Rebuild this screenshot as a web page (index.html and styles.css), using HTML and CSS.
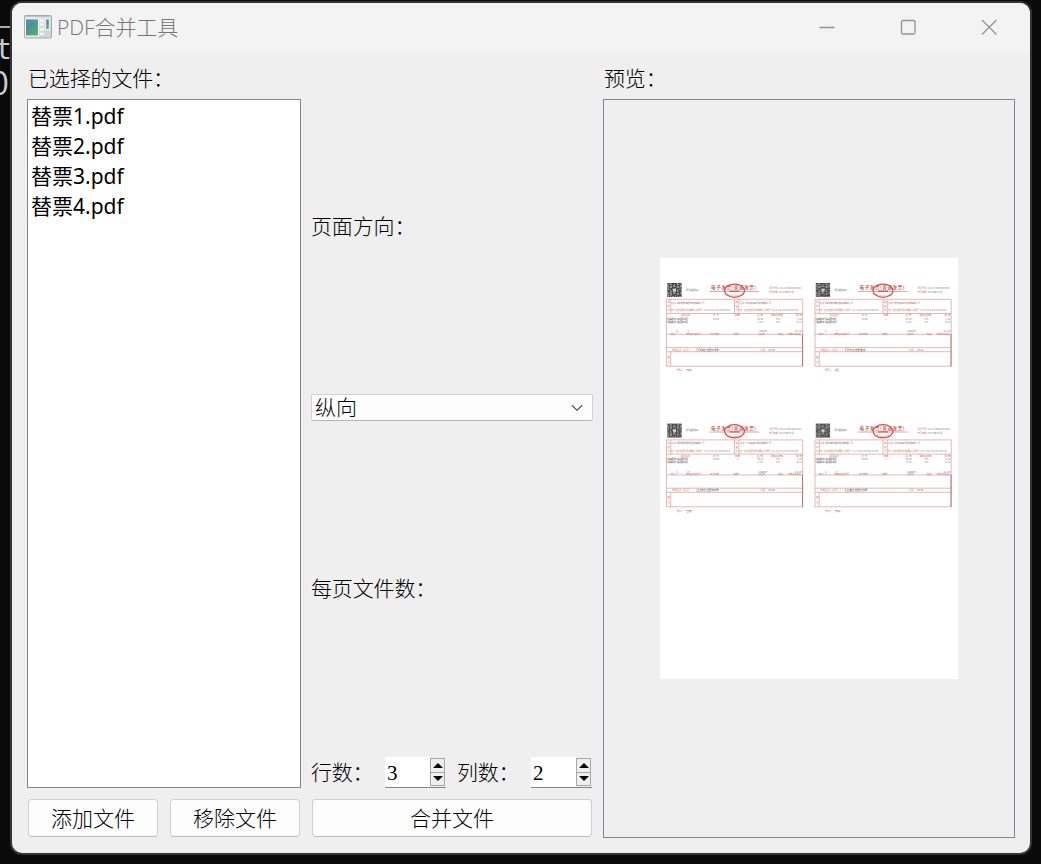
FILE: index.html
```html
<!DOCTYPE html>
<html lang="zh-CN">
<head>
<meta charset="utf-8">
<title>PDF合并工具</title>
<link rel="stylesheet" href="styles.css">
</head>
<body>
<div class="terminal"><span class="term-line"></span><span class="term-t">t</span><span class="term-o">0</span></div>
<main class="window">
  <header class="titlebar">
    <svg class="app-icon" width="28" height="24" viewBox="0 0 28 24">
      <defs>
        <linearGradient id="screen" x1="0" y1="0" x2="1" y2="1"><stop offset="0" stop-color="#427ea5"/><stop offset=".5" stop-color="#4d9a91"/><stop offset="1" stop-color="#62b562"/></linearGradient>
        <linearGradient id="shell" x1="0" y1="0" x2="1" y2="1"><stop offset="0" stop-color="#e9edef"/><stop offset="1" stop-color="#cfd2d3"/></linearGradient>
        <linearGradient id="strip" x1="0" y1="0" x2="0" y2="1"><stop offset="0" stop-color="#4d83a8"/><stop offset="1" stop-color="#62b57a"/></linearGradient>
      </defs>
      <rect x=".5" y=".5" width="27" height="22.500" rx="1" fill="url(#shell)" stroke="#a5adb3"/>
      <path d="M1 1.500h26" stroke="#b4c3ce"/>
      <rect x="1.500" y="4" width="13" height="17" fill="url(#screen)" stroke="#f5f7f7"/>
      <path d="M2 12c3-4 7-6 12-6V4.500H2z" fill="#6fa0bd" opacity=".35"/>
      <path d="M16 5.500h4M16 9.500h4M16 14.500h4M16 19h4" stroke="#f8f8f8" stroke-width="2"/>
      <rect x="21.700" y="4" width="3.600" height="10.500" fill="url(#strip)" stroke="#f5f7f7"/>
    </svg>
    <h1>PDF合并工具</h1>
    <div class="controls">
      <svg width="16" height="16" viewBox="0 0 16 16"><path d="M.5 8.500h15"/></svg>
      <svg width="16" height="16" viewBox="0 0 16 16"><rect x="1.500" y="1.500" width="13.500" height="13.500" rx="1.500"/></svg>
      <svg width="16" height="16" viewBox="0 0 16 16"><path d="M1 1l14.500 14.500M15.500 1L1 15.500"/></svg>
    </div>
  </header>
  <div class="content">
    <section class="files">
      <div class="label">已选择的文件：</div>
      <ul class="file-list"><li>替票1.pdf</li><li>替票2.pdf</li><li>替票3.pdf</li><li>替票4.pdf</li></ul>
      <div class="buttons"><button>添加文件</button><button>移除文件</button></div>
    </section>
    <section class="options">
      <div class="cell orientation">页面方向：</div>
      <div class="combo"><span>纵向</span><svg width="12" height="8" viewBox="0 0 12 8"><path d="M.8 1.200L6 6.200l5.200-5"/></svg></div>
      <div class="cell per-page">每页文件数：</div>
      <div class="counts">
        <span class="count-label">行数：</span>
        <div class="spin"><span>3</span><div class="arrows"><i class="up"></i><i class="down"></i></div></div>
        <span class="count-label second">列数：</span>
        <div class="spin"><span>2</span><div class="arrows"><i class="up"></i><i class="down"></i></div></div>
      </div>
      <button class="merge">合并文件</button>
    </section>
    <section class="preview">
      <div class="label">预览：</div>
      <div class="frame">
        <svg class="paper" width="298" height="421" viewBox="0 0 298 421">
          <defs>
            <pattern id="qr" width="7" height="7" patternUnits="userSpaceOnUse">
              <path d="M0 0h1v2h1v1H0zM3 0h2v1H3zM6 1h1v2H6zM3 2h2v2H3zM1 4h1v2H1zM5 5h2v1H5zM3 5h1v2H3z" fill="#c4c4c4"/>
            </pattern>
            <symbol id="invoice" width="150" height="110" viewBox="0 0 150 110">
              <g>
                <rect x="7.300" y="13" width="14.300" height="14" fill="#4b4b4b"/>
                <rect x="7.300" y="13" width="14.300" height="14" fill="url(#qr)" opacity=".55"/>
                <path d="M8.500 14.500h3v3h-3zM17.500 14.500h3v3h-3zM8.500 22.500h3v3h-3z" fill="none" stroke="#999" stroke-width=".5"/>
                <rect x="13" y="18.700" width="3" height="3" fill="#ccc"/>
              </g>
              <text class="gray" x="25.500" y="20.600" textLength="13">发票查验请扫</text>
              <text class="heading" x="51" y="19.400" textLength="45">电子发票(普通发票)</text>
              <path d="M49.500 21.400H99" stroke="#cf8c8c" stroke-width=".8"/>
              <ellipse cx="74.500" cy="20.700" rx="10" ry="6.600" fill="none" stroke="#df4a48" stroke-width="1.200"/>
              <path d="M69.500 21.300h10" stroke="#dc5654" stroke-width="1.400"/>
              <path d="M67.500 24.200q7 3.500 14 0" fill="none" stroke="#e78a88" stroke-width="1" stroke-dasharray=".8 .6"/>
              <text class="red" x="109" y="19.300" textLength="9">发票号码</text><text class="gray" x="119" y="19.300" textLength="22">24117000000000</text>
              <text class="red" x="109" y="23.400" textLength="9">开票日期</text><text class="gray" x="119" y="23.400" textLength="15">2024年04月</text>
              <g class="rules">
                <path d="M6.500 29.300h136.200v66.900H6.500zM6.500 43.500h136.200M10.800 29.300v14.200M74.500 29.300v14.200M78.800 29.300v14.200M6.500 64.300h136.200M6.500 77.600h136.200M6.500 81.700h136.200M37 77.600v4.100M10.700 81.700v14.500"/>
              </g>
              <path d="M142.500 64v32.500" stroke="#bc7775" stroke-width="1"/>
              <text class="red" x="7.400" y="33.300">购</text><text class="red" x="7.400" y="37">买</text><text class="red" x="7.400" y="41">方</text>
              <text class="red" x="75.400" y="33.300">销</text><text class="red" x="75.400" y="37">售</text><text class="red" x="75.400" y="41">方</text>
              <text class="red" x="11" y="33.600" textLength="5">名称</text><text class="red" x="79.500" y="33.600" textLength="5">名称</text>
              <text class="red" x="11" y="41" textLength="32">统一社会信用代码/纳税人识别号:</text><text class="gray" x="44" y="41" textLength="26">91330100000000</text>
              <text class="red" x="79.500" y="41" textLength="32">统一社会信用代码/纳税人识别号:</text><text class="gray" x="112" y="41" textLength="26">91330100000000</text>
              <text class="red" x="21" y="46.400" textLength="9">项目名称</text><text class="red" x="53" y="46.400" textLength="6">单 价</text><text class="red" x="75" y="46.400" textLength="5">数量</text><text class="red" x="97" y="46.400" textLength="6">金 额</text><text class="red" x="111" y="46.400" textLength="12">税率/征收率</text><text class="red" x="136" y="46.400" textLength="6">税 额</text>
              <text class="dark" x="6.300" y="49.600" textLength="22">*运输服务*客运服务费</text><text class="dark" x="6.300" y="52.800" textLength="22">*运输服务*客运服务费</text>
              <text class="gray" x="53" y="49.600">49.29</text><text class="gray" x="77" y="49.600">1</text><text class="gray" x="97" y="49.600">49.29</text><text class="gray" x="116" y="49.600">3%</text><text class="gray" x="137" y="49.600">1.48</text>
              <text class="gray" x="97" y="52.800">-4.29</text><text class="gray" x="116" y="52.800">3%</text><text class="gray" x="136" y="52.800">-0.13</text>
              <text class="red" x="16" y="62">合</text><text class="red" x="27" y="62">计</text><text class="gray" x="99" y="62" textLength="8">¥280.59</text><text class="gray" x="135" y="62" textLength="7">¥4.36</text>
              <text class="red" x="10" y="64.600" textLength="6">出行人</text><text class="red" x="26" y="64.600" textLength="15">有效身份证件号</text><text class="red" x="50" y="64.600" textLength="9">出行日期</text><text class="red" x="73" y="64.600" textLength="6">出发地</text><text class="red" x="98" y="64.600" textLength="7">到达地</text><text class="red" x="118" y="64.600" textLength="5">等级</text><text class="red" x="128" y="64.600" textLength="13">交通工具类型</text>
              <text class="red" x="12" y="80.700" textLength="19">价税合计（大写）</text><text class="red" x="99" y="80.700" textLength="8">（小写）</text><text class="gray" x="108" y="80.700" textLength="7">¥45.00</text>
              <circle cx="39.500" cy="79.700" r="1.200" fill="none" stroke="#777" stroke-width=".5"/>
              <text class="red" x="7.500" y="87.500">备</text><text class="red" x="7.500" y="92.500">注</text>
              <text class="red" x="16.500" y="101" textLength="6">开票人:</text>
            </symbol>
          </defs>
          <g><use href="#invoice" x="0" y="12"/><text class="gray" x="16.500" y="45.600" textLength="28">深圳市鹏程软件科技有限公司</text><text class="gray" x="85.500" y="45.600" textLength="26">杭州滴滴出行科技有限公司</text><text class="dark" x="41" y="92.700" textLength="18">肆拾伍圆贰角整</text><text class="gray" x="26" y="113" textLength="6">于秋红</text></g>
          <g transform="translate(148.500)"><use href="#invoice" x="0" y="12"/><text class="gray" x="16.500" y="45.600" textLength="28">深圳市鹏程软件科技有限公司</text><text class="gray" x="85.500" y="45.600" textLength="26">南京滴滴出行科技有限公司</text><text class="dark" x="41" y="92.700" textLength="16">贰拾陆圆叁角</text><text class="gray" x="26" y="113" textLength="4.500">张丽</text></g>
          <g transform="translate(0 140.600)"><use href="#invoice" x="0" y="12"/><text class="gray" x="16.500" y="45.600" textLength="28">深圳市鹏程软件科技有限公司</text><text class="gray" x="85.500" y="45.600" textLength="26">广州滴滴出行科技有限公司</text><text class="dark" x="41" y="92.700" textLength="18">陆拾伍圆肆角整</text><text class="gray" x="26" y="113" textLength="6">王文娟</text></g>
          <g transform="translate(148.500 140.600)"><use href="#invoice" x="0" y="12"/><text class="gray" x="16.500" y="45.600" textLength="28">深圳市鹏程软件科技有限公司</text><text class="gray" x="85.500" y="45.600" textLength="26">北京滴滴出行科技有限公司</text><text class="dark" x="41" y="92.700" textLength="18">叁拾陆圆贰角整</text><text class="gray" x="26" y="113" textLength="6">于秋红</text></g>
        </svg>
      </div>
    </section>
  </div>
</main>
</body>
</html>
```

FILE: styles.css
```css
* { box-sizing: border-box; }
body {
  margin: 0;
  width: 1041px;
  height: 864px;
  padding: 1px 9px 9px 10px;
  overflow: hidden;
  background: #0a0a0a;
  position: relative;
  color: #000;
  font: 300 21px/30px "Noto Sans CJK SC", sans-serif;
}
.terminal { position: absolute; left: 0; top: 0; width: 10px; height: 110px; overflow: hidden; color: #ccc; font: 28px/30px "DejaVu Sans Mono", monospace; }
.terminal span { position: absolute; }
.term-line { left: 0; top: 26px; width: 10px; height: 2px; background: #aaa; }
.term-t { left: -5px; top: 35px; }
.term-o { left: -10px; top: 68px; font: 33px/30px "Open Sans", sans-serif; }

.window { width: 1022px; height: 854px; border: 2px solid #343434; border-radius: 12px; overflow: hidden; background: #efefef; display: flex; flex-direction: column; }
.titlebar { height: 50px; flex: none; display: flex; align-items: center; padding: 0 33px 2px 12px; background: #f3f3f3; }
.titlebar h1 { margin: 0 auto 0 5px; font: 300 21px/30px "Open Sans", "Noto Sans CJK SC", sans-serif; color: #777; letter-spacing: -.05px; }
.controls { display: flex; gap: 65px; }
.controls svg { fill: none; stroke: #939393; stroke-width: 1.300; }

.content { flex: 1; display: grid; grid-template-columns: 274px 282px 412px; gap: 10px; padding: 10px 15px 15px; }
.files, .options, .preview { display: flex; flex-direction: column; min-height: 0; }
.label { height: 36px; padding-left: 1px; line-height: 28px; white-space: nowrap; letter-spacing: -.15px; }
.file-list { list-style: none; margin: 0; padding: 1px 3px; height: 689px; border: 1px solid #828790; background: #fff; font: 400 21px/30px "Noto Sans", "Noto Sans CJK SC", sans-serif; }
.file-list li { height: 30px; }
.buttons { display: flex; gap: 12px; padding: 0 1px; margin-top: 11px; }
button { flex: 1; height: 38px; padding: 0 0 2px; border: 1px solid #d0d0d0; border-bottom-color: #bababa; border-radius: 4px; background: #fdfdfd; color: #000; font: inherit; line-height: 34px; }

.cell { padding-left: 0; display: flex; align-items: center; letter-spacing: -.15px; }
.orientation { height: 331px; padding-bottom: 7px; }
.combo { height: 27px; padding: 0 9px 0 3px; display: flex; align-items: center; justify-content: space-between; border: 1px solid #d2d2d2; border-bottom-color: #b5b5b5; border-radius: 2px; background: #fdfdfd; }
.combo span { line-height: 28px; padding-bottom: 3px; }
.combo svg { fill: none; stroke: #555; stroke-width: 1.200; }
.per-page { height: 336px; padding-bottom: 4px; }
.counts { display: flex; height: 31px; align-items: center; }
.count-label { width: 74px; padding-bottom: 3px; white-space: nowrap; letter-spacing: -.3px; }
.count-label.second { margin-left: 11px; }
.spin { width: 61px; height: 31px; display: flex; background: #fff; border-bottom: 1px solid #858585; font: 21px/33px "Liberation Serif", serif; padding-left: 2px; justify-content: space-between; }
.arrows { width: 16px; height: 30px; display: grid; padding: 1px 1px 1px 0; background: #efefef; }
.arrows i { width: 15px; border: 1px solid #a8a8a8; display: grid; place-items: center; }
.arrows .down { border-top: 0; }
.arrows i::after { content: ""; width: 0; height: 0; border: 5px solid transparent; border-top: 0; border-bottom: 5px solid #000; }
.arrows .down::after { border-top: 5px solid #000; border-bottom: 0; }
.merge { flex: none; margin: 11px 1px 0; }

.frame { height: 739px; border: 1px solid #828790; display: grid; place-items: center; }
.paper { display: block; background: #fff; }
.paper text { font: 400 2.500px "Noto Sans CJK SC", sans-serif; }
.paper .red { fill: #cc7f7d; }
.paper .gray { fill: #858585; }
.paper .dark { fill: #555; }
.paper .heading { fill: #b8504e; font: 500 4.600px "Noto Sans CJK SC", sans-serif; }
.rules { fill: none; stroke: #dc9a98; stroke-width: .7; }
```
